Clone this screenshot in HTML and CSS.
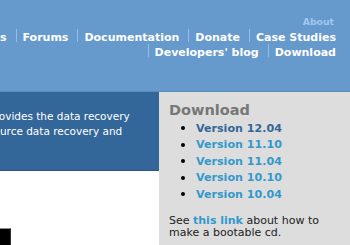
FILE: index.html
```html
<!DOCTYPE html>
<html>
<head>
<meta charset="utf-8">
<link rel="stylesheet" href="styles.css">
</head>
<body>
<div class="page">
  <header class="top">
    <div class="about-row"><a class="about" href="#">About</a></div>
    <nav class="menu">
      <ul class="menu-row">
        <li><a href="#">Products</a></li>
        <li class="sep"><a href="#">Forums</a></li>
        <li class="sep"><a href="#">Documentation</a></li>
        <li class="sep"><a href="#">Donate</a></li>
        <li class="sep"><a href="#">Case Studies</a></li>
      </ul>
      <ul class="menu-row">
        <li class="sep"><a href="#">Developers' blog</a></li>
        <li class="sep"><a href="#">Download</a></li>
      </ul>
    </nav>
  </header>
  <div class="content">
    <main class="main">
      <section class="intro">
        <p class="intro-text"><span class="line">provides the data recovery</span><span class="line">source data recovery and</span></p>
      </section>
      <div class="main-body">
        <div class="thumb"></div>
      </div>
    </main>
    <aside class="side">
      <h2 class="side-title">Download</h2>
      <ul class="versions">
        <li><a class="current" href="#">Version 12.04</a></li>
        <li><a href="#">Version 11.10</a></li>
        <li><a href="#">Version 11.04</a></li>
        <li><a href="#">Version 10.10</a></li>
        <li><a href="#">Version 10.04</a></li>
      </ul>
      <p class="side-note">See <a href="#">this link</a> about how to make a bootable cd.</p>
    </aside>
  </div>
</div>
</body>
</html>
```

FILE: styles.css
```css
html, body {
  margin: 0;
  padding: 0;
  overflow: hidden;
}
body {
  width: 350px;
  height: 245px;
  font-family: "DejaVu Sans", Verdana, sans-serif;
  background: #ffffff;
}
a { text-decoration: none; }

.page {
  display: flex;
  flex-direction: column;
  height: 245px;
}

.top {
  background: #6699cc;
  height: 75px;
  padding-top: 16px;
  border-bottom: 1px solid #5b8bbb;
  overflow: hidden;
}
.about-row {
  display: flex;
  justify-content: flex-end;
  padding-right: 16px;
  height: 11px;
  line-height: 11px;
  margin-bottom: 2px;
}
.about {
  font-size: 9.3px;
  font-weight: bold;
  color: #a3c7ef;
}
.menu {
  display: flex;
  flex-direction: column;
  gap: 2px;
}
.menu-row {
  list-style: none;
  margin: 0;
  padding: 0 14px 0 0;
  display: flex;
  justify-content: flex-end;
  white-space: nowrap;
}
.menu-row li {
  margin-left: 9px;
  padding-left: 6px;
  height: 13px;
  line-height: 13px;
  flex: none;
}
.menu-row li.sep {
  border-left: 1px solid #93bde6;
}
.menu-row a {
  color: #ffffff;
  font-size: 11px;
  font-weight: bold;
}

.content {
  flex: 1;
  display: flex;
}
.main {
  flex: 1;
  display: flex;
  flex-direction: column;
}
.intro {
  background: #336699;
  height: 78px;
  border-bottom: 1px solid #2b5783;
  overflow: hidden;
}
.intro-text {
  margin: 17px 0 0 -12px;
  color: #ffffff;
  font-size: 10.5px;
  line-height: 15px;
  white-space: nowrap;
}
.line { display: block; }
.main-body {
  flex: 1;
  display: flex;
  flex-direction: column;
  justify-content: flex-end;
}
.thumb {
  width: 10px;
  height: 16px;
  background: #000000;
  border-top: 1px solid #8c8c8c;
  border-right: 1px solid #333333;
}

.side {
  width: 181px;
  background: #dddddd;
  padding: 10px 0 0 10px;
}
.side-title {
  margin: 0;
  font-size: 14.5px;
  line-height: 17px;
  font-weight: bold;
  color: #777777;
}
.versions {
  list-style: none;
  margin: 1px 0 0 0;
  padding: 0;
}
.versions li {
  display: flex;
  align-items: center;
  height: 16.5px;
}
.versions li::before {
  content: "";
  width: 4px;
  height: 4px;
  border-radius: 50%;
  background: #000000;
  margin: 0 11px 0 12px;
}
.versions a {
  font-size: 11.1px;
  font-weight: bold;
  color: #3399cc;
}
.versions a.current {
  color: #336699;
}
.side-note {
  margin: 12px 0 0 0;
  font-size: 11px;
  line-height: 12.5px;
  color: #222222;
}
.side-note a {
  font-weight: bold;
  color: #3399cc;
}
```
